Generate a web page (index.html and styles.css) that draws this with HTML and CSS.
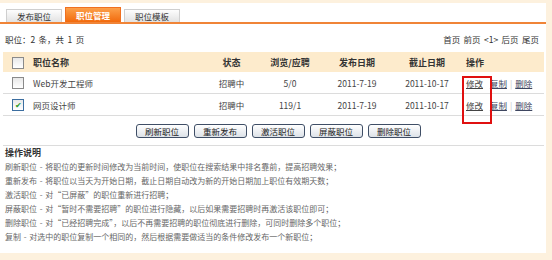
FILE: index.html
```html
<!DOCTYPE html>
<html lang="zh-CN">
<head>
    <meta charset="UTF-8">
    <title>职位管理</title>
    <link rel="stylesheet" href="styles.css">
</head>
<body>
<div class="page">
    <!-- Tabs -->
    <div class="tabs">
        <div class="tab">发布职位</div>
        <div class="tab active">职位管理</div>
        <div class="tab">职位模板</div>
    </div>

    <div class="summary">
        <span>职位：2 条，共 1 页</span>
        <span class="pager">首页 前页 &lt;1&gt; 后页 尾页</span>
    </div>

    <table class="jobs">
        <thead>
        <tr>
            <th class="c-check"><span class="box"></span></th>
            <th class="c-name">职位名称</th>
            <th class="c-state">状态</th>
            <th class="c-views">浏览/应聘</th>
            <th class="c-pub">发布日期</th>
            <th class="c-end">截止日期</th>
            <th class="c-op">操作</th>
        </tr>
        </thead>
        <tbody>
        <tr>
            <td class="c-check"><span class="box"></span></td>
            <td class="c-name">Web开发工程师</td>
            <td class="c-state">招聘中</td>
            <td class="c-views">5/0</td>
            <td class="c-pub">2011-7-19</td>
            <td class="c-end">2011-10-17</td>
            <td class="c-op"><a class="edit">修改</a> <a>复制</a><i>|</i><a>删除</a></td>
        </tr>
        <tr>
            <td class="c-check"><span class="box checked">&#10004;</span></td>
            <td class="c-name">网页设计师</td>
            <td class="c-state">招聘中</td>
            <td class="c-views">119/1</td>
            <td class="c-pub">2011-7-19</td>
            <td class="c-end">2011-10-17</td>
            <td class="c-op"><a class="edit">修改</a> <a>复制</a><i>|</i><a>删除</a></td>
        </tr>
        </tbody>
    </table>
    <div class="mark"></div>

    <div class="actions">
        <button>刷新职位</button>
        <button>重新发布</button>
        <button>激活职位</button>
        <button>屏蔽职位</button>
        <button>删除职位</button>
    </div>

    <div class="help">
        <h4>操作说明</h4>
        <p>刷新职位 - 将职位的更新时间修改为当前时间，使职位在搜索结果中排名靠前，提高招聘效果；</p>
        <p>重新发布 - 将职位以当天为开始日期，截止日期自动改为新的开始日期加上职位有效期天数；</p>
        <p>激活职位 - 对“已屏蔽”的职位重新进行招聘；</p>
        <p>屏蔽职位 - 对“暂时不需要招聘”的职位进行隐藏，以后如果需要招聘时再激活该职位即可；</p>
        <p>删除职位 - 对“已经招聘完成”，以后不再需要招聘的职位彻底进行删除，可同时删除多个职位；</p>
        <p>复制 - 对选中的职位复制一个相同的，然后根据需要做适当的条件修改发布一个新职位；</p>
    </div>
</div>
</body>
</html>
```

FILE: styles.css
```css
body { margin: 0; background: #fdf1de; font-family: "Noto Sans CJK SC", "Liberation Sans", sans-serif; font-size: 8.5px; color: #444; }
.page { position: relative; width: 546px; height: 250px; margin-top: 3px; background: #fff; }

.tabs { display: flex; align-items: flex-end; gap: 3px; height: 19px; padding-left: 6px; border-bottom: 2px solid #f08437; }
.tab { width: 54px; height: 12px; line-height: 12px; text-align: center; background: linear-gradient(#fdfdfd, #e2e2e2); border: 1px solid #cfcfcf; border-bottom: none; color: #333; }
.tab.active { height: 14px; line-height: 14px; background: linear-gradient(#fca04a, #f26a0d); border-color: #f07020; color: #fff; font-weight: bold; }

.summary { display: flex; justify-content: space-between; height: 28px; line-height: 30px; padding: 0 7px 0 5px; color: #333; word-spacing: 1.5px; }

.jobs { width: 541px; margin-left: 3px; border-collapse: collapse; table-layout: fixed; }
.jobs th { height: 20px; background: #fdebcc; font-weight: bold; font-size: 9px; color: #333; padding: 0; }
.jobs td { height: 21px; border-bottom: 1px solid #dcdcdc; padding: 0; }
.jobs .c-check { width: 30px; text-align: center; }
.jobs .c-name { width: 172px; text-align: left; }
.jobs .c-state { width: 53px; text-align: center; }
.jobs .c-views { width: 64px; text-align: center; }
.jobs .c-pub { width: 70px; text-align: center; }
.jobs .c-end { width: 70px; text-align: center; }
.jobs .c-op { text-align: left; padding-left: 4px; }
.jobs a { color: #3e4660; text-decoration: underline; }
.jobs .edit { margin-right: 5px; color: #444; }
.jobs i { font-style: normal; color: #c4c4c4; margin: 0 3px; }

.box { display: inline-block; width: 10px; height: 10px; border: 1px solid #8a8a8a; background: linear-gradient(#e8e8e8, #fff); vertical-align: middle; font-size: 8px; line-height: 10px; color: #2a9a2a; text-align: center; }
.box.checked { border-color: #3c6ea0; }

.mark { position: absolute; left: 462px; top: 73px; width: 26px; height: 44px; border: 2px solid #e01010; }

.actions { display: flex; justify-content: center; gap: 5px; width: 541px; margin-left: 3px; padding: 8px 0 7px 9px; border-bottom: 1px solid #dcdcdc; box-sizing: border-box; }
.actions button { width: 53px; height: 14px; padding: 0; border: 1px solid #3f4e66; border-radius: 3px; background: linear-gradient(#fff, #dde2e8); font-family: inherit; font-size: 8.5px; line-height: 12px; color: #222; }

.help { padding: 0 5px; color: #666; font-size: 8px; word-spacing: 1px; }
.help h4 { margin: 0; font-size: 9px; line-height: 14px; color: #333; }
.help p { margin: 0; line-height: 14px; }
```
